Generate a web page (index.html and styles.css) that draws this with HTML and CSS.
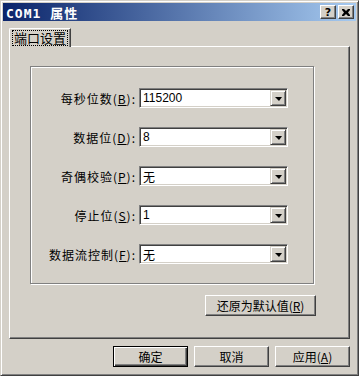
FILE: index.html
```html
<!DOCTYPE html>
<html lang="zh-CN">
<head>
    <meta charset="UTF-8">
    <title>COM1 属性</title>
    <link rel="stylesheet" href="styles.css">
</head>
<body>
<div class="window">

    <div class="titlebar">
        <span class="title">COM1 属性</span>
        <div class="caption-buttons">
            <button class="caption-btn">?</button>
            <button class="caption-btn">
                <svg width="8" height="7" viewBox="0 0 8 7"><path d="M0 0h2l2 2 2-2h2v1l-2 2.5 2 2.5v1h-2l-2-2-2 2h-2v-1l2-2.5-2-2.5z" fill="#000"/></svg>
            </button>
        </div>
    </div>

    <div class="dialog">
        <div class="tabs">
            <div class="tab active"><span class="focus">端口设置</span></div>
        </div>

        <div class="panel">
            <div class="group">
                <div class="row">
                    <span class="label">每秒位数(<u>B</u>):</span>
                    <div class="combo"><span class="value">115200</span><span class="arrow"></span></div>
                </div>
                <div class="row">
                    <span class="label">数据位(<u>D</u>):</span>
                    <div class="combo"><span class="value">8</span><span class="arrow"></span></div>
                </div>
                <div class="row">
                    <span class="label">奇偶校验(<u>P</u>):</span>
                    <div class="combo"><span class="value">无</span><span class="arrow"></span></div>
                </div>
                <div class="row">
                    <span class="label">停止位(<u>S</u>):</span>
                    <div class="combo"><span class="value">1</span><span class="arrow"></span></div>
                </div>
                <div class="row">
                    <span class="label">数据流控制(<u>F</u>):</span>
                    <div class="combo"><span class="value">无</span><span class="arrow"></span></div>
                </div>
            </div>

            <div class="reset-row">
                <button class="btn reset">还原为默认值(<u>R</u>)</button>
            </div>
        </div>

        <div class="footer">
            <button class="btn default">确定</button>
            <button class="btn">取消</button>
            <button class="btn">应用(<u>A</u>)</button>
        </div>
    </div>

</div>
</body>
</html>
```

FILE: styles.css
```css
body {
    margin: 0;
    padding: 0;
    background-color: #d4d0c8;
    font-family: "Liberation Sans", "Noto Sans CJK SC", sans-serif;
    font-size: 12px;
    color: #000;
}

.window {
    width: 359px;
    height: 376px;
    box-sizing: border-box;
    background-color: #d4d0c8;
    border: 1px solid;
    border-color: #d4d0c8 #404040 #404040 #d4d0c8;
    box-shadow: inset 1px 1px #fff, inset -1px -1px #808080;
    padding: 2px;
    display: flex;
    flex-direction: column;
}

.titlebar {
    height: 18px;
    flex-shrink: 0;
    display: flex;
    align-items: center;
    padding: 0 2px 0 3px;
    background: linear-gradient(to right, #0a246a, #a6caf0);
}

.title {
    color: #fff;
    font-weight: bold;
    font-family: "DejaVu Sans Mono", "Noto Sans CJK SC", monospace;
    font-size: 13px;
    letter-spacing: 1px;
}

.caption-buttons {
    margin-left: auto;
    display: flex;
    gap: 2px;
}

.caption-btn {
    width: 16px;
    height: 14px;
    padding: 0;
    margin: 0;
    box-sizing: border-box;
    background-color: #d4d0c8;
    border: 1px solid;
    border-color: #fff #404040 #404040 #fff;
    box-shadow: inset -1px -1px #808080;
    display: flex;
    align-items: center;
    justify-content: center;
    font-family: "DejaVu Sans", sans-serif;
    font-weight: bold;
    font-size: 11px;
    line-height: 1;
    color: #000;
}

.dialog {
    flex: 1;
    display: flex;
    flex-direction: column;
    padding: 7px 6px 6px 6px;
}

.tabs {
    height: 18px;
    display: flex;
}

.tab {
    position: relative;
    z-index: 1;
    height: 19px;
    box-sizing: border-box;
    padding: 2px 3px 0 3px;
    background-color: #d4d0c8;
    border-left: 1px solid #fff;
    border-top: 1px solid #fff;
    border-right: 1px solid #404040;
    box-shadow: inset -1px 0 #808080;
    border-top-left-radius: 2px;
}

.focus {
    display: inline-block;
    outline: 1px dotted #000;
    padding: 0 1px;
    line-height: 14px;
    font-family: "Noto Sans CJK SC", sans-serif;
    font-size: 13px;
}

.panel {
    height: 293px;
    box-sizing: border-box;
    border: 1px solid;
    border-color: #fff #404040 #404040 #fff;
    box-shadow: inset -1px -1px #808080;
    padding: 19px 0 0 20px;
    display: flex;
    flex-direction: column;
    align-items: flex-start;
}

.group {
    width: 284px;
    height: 218px;
    box-sizing: border-box;
    border: 1px solid #808080;
    box-shadow: inset 1px 1px #fff, 1px 1px #fff;
    padding: 21px 25px 0 1px;
    display: flex;
    flex-direction: column;
    gap: 19px;
}

.row {
    height: 20px;
    display: grid;
    grid-template-columns: 1fr 149px;
    column-gap: 3px;
    align-items: center;
}

.label {
    text-align: right;
    white-space: nowrap;
    letter-spacing: 1px;
    font-family: "Noto Sans CJK SC", sans-serif;
}

.combo {
    height: 20px;
    box-sizing: border-box;
    background-color: #fff;
    border: 1px solid;
    border-color: #808080 #fff #fff #808080;
    box-shadow: inset 1px 1px #404040, inset -1px -1px #d4d0c8;
    padding: 1px;
    display: flex;
    align-items: center;
}

.value {
    flex: 1;
    padding-left: 2px;
}

.arrow {
    width: 16px;
    height: 16px;
    box-sizing: border-box;
    background-color: #d4d0c8;
    border: 1px solid;
    border-color: #d4d0c8 #404040 #404040 #d4d0c8;
    box-shadow: inset 1px 1px #fff, inset -1px -1px #808080;
    display: flex;
    align-items: center;
    justify-content: center;
}

.arrow::after {
    content: "";
    border-left: 4px solid transparent;
    border-right: 3px solid transparent;
    border-top: 4px solid #000;
    margin-top: 1px;
}

.reset-row {
    width: 286px;
    display: flex;
    justify-content: flex-end;
    margin-top: 11px;
}

.btn {
    height: 21px;
    width: 75px;
    box-sizing: border-box;
    margin: 0;
    padding: 0;
    background-color: #d4d0c8;
    border: 1px solid;
    border-color: #fff #404040 #404040 #fff;
    box-shadow: inset -1px -1px #808080;
    font-family: "Noto Sans CJK SC", sans-serif;
    font-size: 12px;
    color: #000;
}

.reset {
    width: 111px;
}

.default {
    border: 1px solid #000;
    box-shadow: inset 1px 1px #fff, inset -1px -1px #404040, inset -2px -2px #808080;
}

.footer {
    margin-top: 7px;
    display: flex;
    justify-content: flex-end;
    gap: 6px;
}
```
